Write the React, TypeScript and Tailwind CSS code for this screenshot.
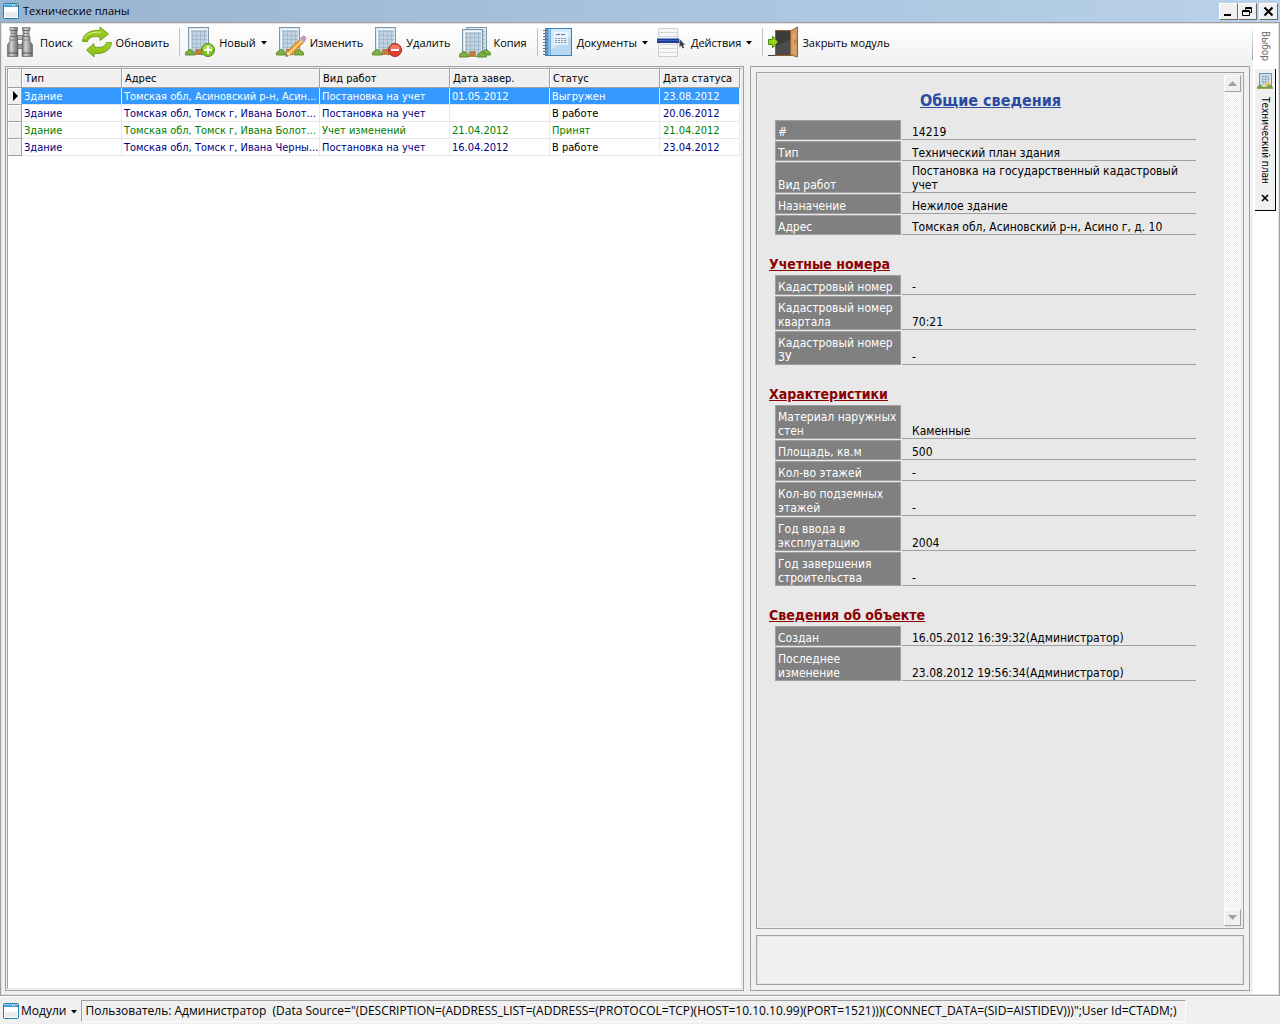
import { useState } from 'react';
import type { ReactNode } from 'react';

const rows = [
  { type: 'Здание', address: 'Томская обл, Асиновский р-н, Асин...', work: 'Постановка на учет', done: '01.05.2012', status: 'Выгружен', statusDate: '23.08.2012', color: 'text-[#000080]' },
  { type: 'Здание', address: 'Томская обл, Томск г, Ивана Болот...', work: 'Постановка на учет', done: '', status: 'В работе', statusDate: '20.06.2012', color: 'text-[#000080]' },
  { type: 'Здание', address: 'Томская обл, Томск г, Ивана Болот...', work: 'Учет изменений', done: '21.04.2012', status: 'Принят', statusDate: '21.04.2012', color: 'text-[#008000]' },
  { type: 'Здание', address: 'Томская обл, Томск г, Ивана Черны...', work: 'Постановка на учет', done: '16.04.2012', status: 'В работе', statusDate: '23.04.2012', color: 'text-[#000080]' },
];

const sections = [
  {
    title: '',
    items: [
      ['#', '14219'],
      ['Тип', 'Технический план здания'],
      ['Вид работ', 'Постановка на государственный кадастровый учет'],
      ['Назначение', 'Нежилое здание'],
      ['Адрес', 'Томская обл, Асиновский р-н, Асино г, д. 10'],
    ],
  },
  {
    title: 'Учетные номера',
    items: [
      ['Кадастровый номер', '-'],
      ['Кадастровый номер квартала', '70:21'],
      ['Кадастровый номер ЗУ', '-'],
    ],
  },
  {
    title: 'Характеристики',
    items: [
      ['Материал наружных стен', 'Каменные'],
      ['Площадь, кв.м', '500'],
      ['Кол-во этажей', '-'],
      ['Кол-во подземных этажей', '-'],
      ['Год ввода в эксплуатацию', '2004'],
      ['Год завершения строительства', '-'],
    ],
  },
  {
    title: 'Сведения об объекте',
    items: [
      ['Создан', '16.05.2012 16:39:32(Администратор)'],
      ['Последнее изменение', '23.08.2012 19:56:34(Администратор)'],
    ],
  },
];

function WindowIcon() {
  return (
    <svg width="16" height="16" viewBox="0 0 16 16" className="shrink-0">
      <rect x="0.5" y="0.5" width="15" height="15" rx="1" fill="#fff" stroke="#1f7fb0" />
      <rect x="1" y="1" width="14" height="3" fill="#3fa3dc" />
      <rect x="1" y="1" width="14" height="1" fill="#8fd0f2" />
      <path d="M9 2.5h1M11 2.5h1" stroke="#e8f6ff" />
      <path d="M13 2.5h1" stroke="#e2543c" />
      <rect x="2" y="5" width="12" height="9" fill="#e9ecef" />
      <path d="M2 5h12v3Q8 10 2 9z" fill="#fff" />
    </svg>
  );
}

function BinocularsIcon() {
  return (
    <svg width="32" height="32" viewBox="0 0 32 32">
      <defs>
        <linearGradient id="tube" x1="0" x2="1" y1="0" y2="0">
          <stop offset="0" stopColor="#6a6a6a" />
          <stop offset="0.35" stopColor="#d2d2d2" />
          <stop offset="1" stopColor="#666" />
        </linearGradient>
      </defs>
      <rect x="12" y="9.500" width="6" height="4" fill="#b5b5b5" stroke="#666" strokeWidth="0.7" />
      <rect x="12" y="18.500" width="6" height="4" fill="#9a9a9a" stroke="#5a5a5a" strokeWidth="0.7" />
      <g stroke="#666" strokeWidth="0.7" fill="url(#tube)">
        <path d="M5 1.500h7.500v3H5zM6 4.500h6v6H6zM5 10.500h7.500v5.500h.5v14.500H2.500V19L5 15z" />
        <path d="M17.500 1.500H25v3h-7.500zM18 4.500h6v6h-6zM17.500 10.500H25V15l2.500 4v11.500H17V16h.5z" />
      </g>
      <path d="M3 27h10M17 27h10" stroke="#555" fill="none" />
      <path d="M6 7.500h6M18 7.500h6M5 14h8M17 14h8" stroke="#777" strokeWidth="0.8" />
    </svg>
  );
}

function RefreshIcon() {
  return (
    <svg width="32" height="32" viewBox="0 0 32 32">
      <defs>
        <linearGradient id="green" x1="0" x2="0" y1="0" y2="1">
          <stop offset="0" stopColor="#a5d32c" />
          <stop offset="1" stopColor="#86bd0c" />
        </linearGradient>
      </defs>
      <g fill="url(#green)" stroke="#6a9c1c" strokeWidth="0.9" strokeLinejoin="round">
        <path d="M1.500 15.500C2 8 9 3.500 19 4.500V1l8.500 7-8.500 6.500V11C11 9.500 7.500 12 6.500 15.500z" />
        <path d="M30.500 16.500C30 24 23 28.500 13 27.500V31l-7.500-7L13 17.500V21c8 1.500 11.500-1 12.500-4.500z" />
      </g>
      <path d="M3.500 13C5.500 8 11 5.600 20 6.300" stroke="#d9f08c" fill="none" />
    </svg>
  );
}

function Bush({ x, y }: { x: number; y: number }) {
  return (
    <path
      transform={`translate(${x} ${y})`}
      d="M.5 6V4.200Q.5 2.500 2.500 2.500Q3 .5 5 .5T7.300 2.500Q9.500 2.500 9.500 4.500V6z"
      fill="#7fb23c"
      stroke="#55852a"
      strokeWidth="0.9"
    />
  );
}

function Tower({ x = 4, y = 1 }: { x?: number; y?: number }) {
  return (
    <g transform={`translate(${x} ${y})`}>
      <rect x="0.5" y="0.5" width="20" height="27" fill="#dbe6ef" stroke="#7d96a8" />
      <rect x="2" y="2" width="17" height="23" fill="#c3d5e4" />
      <path d="M2 4.500h17M2 8.500h17M2 12.500h17M2 16.500h17M2 20.500h17M4.500 2v23M8.500 2v23M12.500 2v23M16.500 2v23" stroke="#a2b8ca" strokeWidth="0.9" />
      <path d="M2.500 25V2.500H19" stroke="#f2f7fb" fill="none" />
    </g>
  );
}

function BuildingIcon({ kind }: { kind: 'add' | 'edit' | 'delete' | 'copy' }) {
  const dy = kind === 'copy' ? 2 : 0;
  return (
    <svg width="32" height="32" viewBox="0 0 32 32" className="overflow-visible">
      {kind === 'copy' && <Tower x={8} y={1} />}
      <Tower x={4} y={1 + dy} />
      <rect x="11.500" y={23.5 + dy} width="6" height="6" fill="#c27d3a" stroke="#fff" />
      <path d={kind === 'copy' ? 'M11.500 31V25.500h6V31' : 'M11.500 29.500V23.500h6v6'} fill="none" stroke="#9b5f28" strokeWidth="0.8" />
      <Bush x={1} y={23 + dy} />
      {kind === 'copy' && <Bush x={23} y={23} />}
      {(kind === 'edit' || kind === 'copy') && <Bush x={19} y={23 + dy} />}
      {kind === 'add' && (
        <g>
          <circle cx="24" cy="24" r="6.500" fill="#7ec31d" stroke="#4f8a12" />
          <path d="M18.500 23Q20 18.500 24 18.500T29.500 23z" fill="#a5da51" />
          <path d="M24 20v8M20 24h8" stroke="#fff" strokeWidth="2" />
        </g>
      )}
      {kind === 'delete' && (
        <g>
          <circle cx="24" cy="24" r="6.500" fill="#df3e2e" stroke="#b02a20" />
          <path d="M18.500 23Q20 18.500 24 18.500T29.500 23z" fill="#f07a68" />
          <path d="M20 24h8" stroke="#fff" strokeWidth="2" />
        </g>
      )}
      {kind === 'edit' && (
        <g>
          <path d="M11 30.500l1.500-5L25.500 12.500l3.500 3.500L16 29z" fill="#f6a733" stroke="#b06a1c" strokeWidth="0.8" />
          <path d="M14 27.500L27 14.500" stroke="#ffd98a" strokeWidth="1.200" />
          <path d="M11 30.500l1.500-5 3.500 3.500z" fill="#f4dfbd" />
          <path d="M11 30.500l.6-2 1.400 1.400z" fill="#333" />
          <path d="M24.500 13.500l1.500-1.500 3.500 3.500-1.500 1.500z" fill="#b9bfc6" />
          <path d="M26 12l1.500-1.500q1.500-1 2.700.3 1.300 1.500.3 2.700L29.500 15.500z" fill="#c99ac9" stroke="#98709c" strokeWidth="0.6" />
        </g>
      )}
    </svg>
  );
}

function DocumentsIcon() {
  return (
    <svg width="32" height="32" viewBox="0 0 32 32">
      <rect x="3.500" y="2.500" width="26" height="27" fill="#5a9fd6" stroke="#3f7fb8" />
      <rect x="9" y="3" width="20" height="26" fill="#b8d8f2" />
      <path d="M9 3h20v7L9 24z" fill="#d3e8f8" />
      <rect x="12" y="6" width="14" height="13" fill="#f2f8fd" opacity="0.800" />
      <path d="M14 8.500h9" stroke="#4a7ba6" strokeDasharray="4 1" />
      <path d="M13 12.500h11M13 14.500h11M13 16.500h11" stroke="#7d97ad" strokeDasharray="2 1" />
      <path d="M7.500 3v26" stroke="#8fc2ea" strokeWidth="2" />
      <path d="M1 4.500h5M1 7.500h5M1 10.500h5M1 13.500h5M1 16.500h5M1 19.500h5M1 22.500h5M1 25.500h5M1 28.500h5" stroke="#67798a" />
    </svg>
  );
}

function ActionsIcon() {
  return (
    <svg width="32" height="32" viewBox="0 0 32 32">
      <rect x="2.500" y="2.500" width="19" height="28" fill="#f7f7f7" stroke="#cfcfcf" />
      <path d="M3 6.500h18M3 10.500h18M3 18.500h18M3 22.500h18M3 26.500h18" stroke="#d5d5d5" />
      <rect x="1" y="12" width="22" height="5" fill="#1f3c93" />
      <path d="M1 12.500h22" stroke="#7f96d6" />
      <path d="M1 14.500h22" stroke="#3d5fc0" />
      <path d="M23.500 13v8l1.800-1.500 1.300 3 1.500-.7-1.300-2.800h2.200z" fill="#3a3f48" />
    </svg>
  );
}

function DoorIcon() {
  return (
    <svg width="32" height="32" viewBox="0 0 32 32">
      <path d="M1 29.500h24" stroke="#444" />
      <rect x="8.500" y="4.500" width="16" height="25" fill="#4c4c4e" stroke="#8d5c2c" />
      <path d="M9 5h15v8L9 20z" fill="#3c3c3f" />
      <path d="M23.500 5L30.500 1v30l-7-2z" fill="#cf9a62" stroke="#96642f" />
      <path d="M25.500 8v19l3 1V6z" fill="#dba970" />
      <path d="M27.500 14v4h1.500v-4z" fill="#f1cf43" stroke="#8d6420" strokeWidth="0.6" />
      <path d="M1.500 13.500h4V10l5.500 6-5.500 6v-3.500h-4z" fill="#9bd416" stroke="#4f8a12" />
    </svg>
  );
}

function Caret() {
  return (
    <svg width="6" height="4" viewBox="0 0 6 4" className="mt-0.5 ml-[5px] shrink-0">
      <path d="M0 0h6L3 3.500z" fill="#000" />
    </svg>
  );
}

function ToolButton({ icon, label, menu }: { icon: ReactNode; label: string; menu?: boolean }) {
  return (
    <button type="button" className="flex shrink-0 items-center pr-2 whitespace-nowrap">
      {icon}
      <span className="ml-[3px] pt-0.5">{label}</span>
      {menu && <Caret />}
    </button>
  );
}

function Separator() {
  return <div className="mr-1 ml-0.5 h-7 w-px shrink-0 bg-[#c0c0c0]" />;
}

const winButton =
  'flex h-[17px] w-[19px] items-center justify-center border border-white border-r-[#696969] border-b-[#696969] bg-[#f0f0f0]';

function TitleBar() {
  return (
    <header className="flex h-[22px] shrink-0 items-center bg-linear-to-r from-[#99b4d1] to-[#b9d1ea] pr-0.5 pl-[3px]">
      <WindowIcon />
      <h1 className="ml-1 flex-1 font-['Open_Sans','Noto_Sans',sans-serif] text-[11px]">Технические планы</h1>
      <button type="button" aria-label="Свернуть" className={winButton}>
        <svg width="11" height="11" viewBox="0 0 11 11"><path d="M1 9h7" stroke="#000" strokeWidth="2" /></svg>
      </button>
      <button type="button" aria-label="Восстановить" className={winButton}>
        <svg width="11" height="11" viewBox="0 0 11 11" fill="none" stroke="#000">
          <path d="M3.500 4V1.500h6v5H8M3 2.500h7" />
          <path d="M.5 4.500h7v5h-7zM0 5.500h8" />
        </svg>
      </button>
      <button type="button" aria-label="Закрыть" className={`${winButton} ml-0.5`}>
        <svg width="11" height="11" viewBox="0 0 11 11"><path d="M1.500 1.500l8 8M9.500 1.500l-8 8" stroke="#000" strokeWidth="2" /></svg>
      </button>
    </header>
  );
}

function Toolbar() {
  return (
    <nav className="flex h-[42px] shrink-0 items-start bg-linear-to-b from-white to-[#f0f0f0] font-['Open_Sans','Noto_Sans',sans-serif] text-[11px]">
      <div className="flex flex-1 items-center pt-0.5 pl-[3px]">
        <ToolButton icon={<BinocularsIcon />} label="Поиск" />
        <ToolButton icon={<RefreshIcon />} label="Обновить" />
        <Separator />
        <ToolButton icon={<BuildingIcon kind="add" />} label="Новый" menu />
        <ToolButton icon={<BuildingIcon kind="edit" />} label="Изменить" />
        <ToolButton icon={<BuildingIcon kind="delete" />} label="Удалить" />
        <ToolButton icon={<BuildingIcon kind="copy" />} label="Копия" />
        <Separator />
        <ToolButton icon={<DocumentsIcon />} label="Документы" menu />
        <ToolButton icon={<ActionsIcon />} label="Действия" menu />
        <Separator />
        <ToolButton icon={<DoorIcon />} label="Закрыть модуль" />
      </div>
      <div className="h-9 w-px bg-linear-to-b from-white to-[#a0a0a0]" />
    </nav>
  );
}

function PlansGrid() {
  const [selected, setSelected] = useState(0);
  const head = 'border-r border-b border-[#a0a0a0] bg-[#f0f0f0] pt-0.5 pl-[3px] text-left font-normal shadow-[inset_1px_1px_0_#fff]';
  const cell = 'overflow-hidden border-r border-b border-[#e8e8e8] pt-0.5 pl-0.5';

  return (
    <div className="flex min-w-0 flex-1 border border-[#a0a0a0] p-px">
      <div className="min-w-0 flex-1 border border-[#a0a0a0] border-r-[#e3e3e3] border-b-[#e3e3e3] bg-white pr-px">
        <table className="w-full table-fixed border-separate border-spacing-0 text-[11px] leading-[14px] whitespace-nowrap">
          <colgroup>
            <col className="w-3.5" />
            <col className="w-[100px]" />
            <col className="w-[198px]" />
            <col className="w-[130px]" />
            <col className="w-[100px]" />
            <col className="w-[110px]" />
            <col />
          </colgroup>
          <thead>
            <tr className="h-[19px]">
              <td className={head} />
              <th className={head}>Тип</th>
              <th className={head}>Адрес</th>
              <th className={head}>Вид работ</th>
              <th className={head}>Дата завер.</th>
              <th className={head}>Статус</th>
              <th className={head}>Дата статуса</th>
            </tr>
          </thead>
          <tbody>
            {rows.map((r, i) => {
              const active = i === selected;
              return (
                <tr key={i} onClick={() => setSelected(i)} className={active ? 'bg-[#3399ff] text-white' : r.color}>
                  <td className="border-r border-b border-[#a0a0a0] bg-[#f0f0f0] shadow-[inset_1px_1px_0_#fff]">
                    {active && (
                      <svg width="5" height="10" viewBox="0 0 5 10" className="ml-[5px]">
                        <path d="M0 0l5 5-5 5z" fill="#000" />
                      </svg>
                    )}
                  </td>
                  <td className={cell}>{r.type}</td>
                  <td className={cell}>{r.address}</td>
                  <td className={cell}>{r.work}</td>
                  <td className={cell}>{r.done}</td>
                  <td className={cell}>
                    <span className={r.status === 'В работе' && !active ? 'text-black' : ''}>{r.status}</span>
                  </td>
                  <td className={`${cell} pl-[3px]`}>{r.statusDate}</td>
                </tr>
              );
            })}
          </tbody>
        </table>
      </div>
    </div>
  );
}

function ScrollButton({ down }: { down?: boolean }) {
  return (
    <button
      type="button"
      aria-label={down ? 'Вниз' : 'Вверх'}
      className="flex h-[17px] items-center justify-center border border-white border-r-[#a0a0a0] border-b-[#a0a0a0] bg-[#f0f0f0]"
    >
      <svg width="9" height="5" viewBox="0 0 9 5">
        <path d={down ? 'M0 0h9L4.500 5z' : 'M0 5h9L4.500 0z'} fill="#a0a0a0" />
      </svg>
    </button>
  );
}

function DetailsPanel() {
  return (
    <div className="flex w-[500px] shrink-0 flex-col gap-1.5 border border-[#a0a0a0] p-[5px]">
      <div className="flex min-h-0 flex-1 border border-[#a0a0a0] bg-[#e8e8e8] shadow-[inset_0_0_0_1px_#f0f0f0]">
        <div className="min-w-0 flex-1 overflow-hidden px-3 pt-[18px] text-[12px] leading-[14px]">
          <h2 className="h-7 text-center text-[16px] leading-5 font-bold text-[#2b4ba0] underline">Общие сведения</h2>
          {sections.map((s) => (
            <section key={s.title}>
              {s.title && (
                <h3 className="h-[38px] pt-[19px] text-[14px] leading-[19px] font-bold text-[#8b0000] underline">{s.title}</h3>
              )}
              <table className="ml-[5px] table-fixed border-separate border-spacing-px">
                <colgroup>
                  <col className="w-[126px]" />
                  <col className="w-[294px]" />
                </colgroup>
                <tbody>
                  {s.items.map(([name, value]) => (
                    <tr key={name}>
                      <th className="border border-[#a0a0a0] bg-[#808080] pt-1 pl-0.5 text-left align-bottom font-normal text-white">
                        {name}
                      </th>
                      <td className="border-b border-[#a0a0a0] px-2.5 pt-0.5 align-bottom">{value}</td>
                    </tr>
                  ))}
                </tbody>
              </table>
            </section>
          ))}
        </div>
        <div className="my-0.5 mr-0.5 flex w-[17px] flex-col justify-between bg-[repeating-conic-gradient(#fff_0_25%,#ececec_0_50%)] bg-[length:2px_2px]">
          <ScrollButton />
          <ScrollButton down />
        </div>
      </div>
      <div className="h-[50px] shrink-0 border border-[#a0a0a0] shadow-[inset_0_0_0_1px_#e3e3e3]" />
    </div>
  );
}

function SideTabs() {
  return (
    <aside className="flex w-[25px] shrink-0 flex-col bg-white pr-px pl-0.5 text-[10px] leading-4">
      <button type="button" className="flex h-[45px] w-5 items-center justify-center text-[#6d6d6d] [writing-mode:vertical-rl]">
        Выбор
      </button>
      <div className="flex w-[21px] flex-col items-center border-r border-b border-black bg-[#f0f0f0] pt-1 pb-2">
        <button type="button" className="flex flex-col items-center gap-2">
          <svg width="16" height="16" viewBox="0 0 32 32">
            <rect x="5" y="1" width="24" height="28" fill="#cfdfec" stroke="#6f93b3" strokeWidth="2" />
            <path d="M9 8h16M9 13h16M9 18h16M12 4v20M17 4v20M22 4v20" stroke="#8fabc4" strokeWidth="1.500" />
            <path d="M14 28l8-14 4 10z" fill="#f2c94c" />
            <Bush x={1} y={23} />
            <Bush x={20} y={23} />
            <path d="M0 30h32" stroke="#6d9c37" strokeWidth="3" />
          </svg>
          <span className="[writing-mode:vertical-rl]">Технический план</span>
        </button>
        <button type="button" aria-label="Закрыть вкладку" className="mt-2.5">
          <svg width="8" height="8" viewBox="0 0 8 8"><path d="M1 1l6 6M7 1L1 7" stroke="#000" strokeWidth="1.600" /></svg>
        </button>
      </div>
    </aside>
  );
}

function StatusBar() {
  return (
    <footer className="flex h-7 shrink-0 items-center border-t border-white bg-[#f0f0f0] pl-[3px] font-['Open_Sans','Noto_Sans',sans-serif] text-[12px] whitespace-nowrap">
      <button type="button" className="flex items-center pr-1">
        <WindowIcon />
        <span className="ml-0.5">Модули</span>
        <Caret />
      </button>
      <div className="h-[22px] overflow-hidden border border-[#a0a0a0] border-r-white border-b-white pr-2 pl-[3px] leading-5 whitespace-pre">
        {'Пользователь: Администратор  (Data Source="(DESCRIPTION=(ADDRESS_LIST=(ADDRESS=(PROTOCOL=TCP)(HOST=10.10.10.99)(PORT=1521)))(CONNECT_DATA=(SID=AISTIDEV)))";User Id=CTADM;)'}
      </div>
    </footer>
  );
}

export default function App() {
  return (
    <div className="flex h-screen flex-col overflow-hidden bg-[#f0f0f0] font-['DejaVu_Sans_Condensed','DejaVu_Sans',sans-serif] text-black">
      <TitleBar />
      <main className="flex min-h-0 flex-1 border border-[#a0a0a0]">
        <div className="flex min-w-0 flex-1 border border-[#e3e3e3]">
          <div className="flex min-w-0 flex-1 flex-col">
            <Toolbar />
            <div className="flex min-h-0 flex-1 gap-1.5 px-[3px] pb-[3px]">
              <PlansGrid />
              <DetailsPanel />
            </div>
          </div>
          <SideTabs />
        </div>
      </main>
      <StatusBar />
    </div>
  );
}
